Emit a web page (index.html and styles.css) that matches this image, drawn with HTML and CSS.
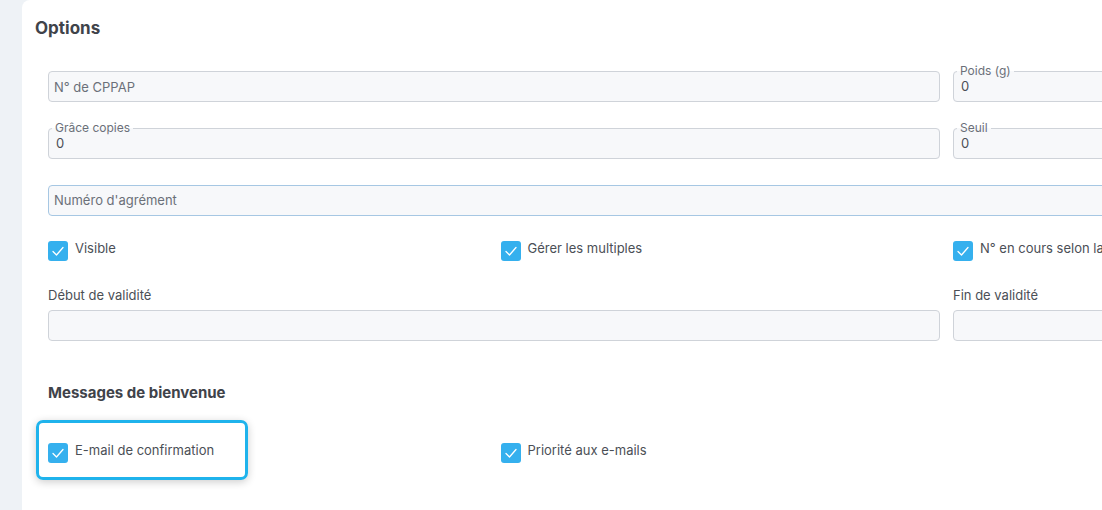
FILE: index.html
```html
<!DOCTYPE html>
<html lang="fr">
<head>
    <meta charset="UTF-8">
    <meta name="viewport" content="width=device-width, initial-scale=1.0">
    <title>Options</title>
    <link rel="stylesheet" href="styles.css">
</head>
<body>
    <div class="card">
        <h2>Options</h2>

        <div class="grid">
            <input class="field span-2" placeholder="N° de CPPAP">
            <fieldset class="legend-field">
                <legend>Poids (g)</legend>
                <div class="value">0</div>
            </fieldset>

            <fieldset class="legend-field span-2">
                <legend>Grâce copies</legend>
                <div class="value">0</div>
            </fieldset>
            <fieldset class="legend-field">
                <legend>Seuil</legend>
                <div class="value">0</div>
            </fieldset>

            <input class="field focused span-3" placeholder="Numéro d'agrément">

            <label class="check-item top-fix"><span class="check"><svg viewBox="0 0 20 20"><polyline points="5,10.5 8.5,14 15,6.5"/></svg></span><span class="check-text">Visible</span></label>
            <label class="check-item top-fix"><span class="check"><svg viewBox="0 0 20 20"><polyline points="5,10.5 8.5,14 15,6.5"/></svg></span><span class="check-text">Gérer les multiples</span></label>
            <label class="check-item top-fix"><span class="check"><svg viewBox="0 0 20 20"><polyline points="5,10.5 8.5,14 15,6.5"/></svg></span><span class="check-text">N° en cours selon la date de parution</span></label>

            <div class="span-2">
                <div class="label">Début de validité</div>
                <input class="field">
            </div>
            <div>
                <div class="label">Fin de validité</div>
                <input class="field">
            </div>
        </div>

        <h3>Messages de bienvenue</h3>

        <div class="grid">
            <label class="check-item">
                <span class="check"><svg viewBox="0 0 20 20"><polyline points="5,10.5 8.5,14 15,6.5"/></svg></span><span class="check-text">E-mail de confirmation</span>
                <span class="spotlight"></span>
            </label>
            <label class="check-item"><span class="check"><svg viewBox="0 0 20 20"><polyline points="5,10.5 8.5,14 15,6.5"/></svg></span><span class="check-text">Priorité aux e-mails</span></label>
        </div>
    </div>
</body>
</html>
```

FILE: styles.css
```css
* { box-sizing: border-box; }
html, body { height: 100%; }
body { margin: 0; background: #eef2f6; font-family: Inter, "Noto Sans", sans-serif; font-size: 13px; color: #4b4f56; overflow: hidden; }

.card { margin-left: 22px; min-height: 100%; width: 1400px; background: #fff; border-top-left-radius: 8px; padding: 17px 0 0 13px; }
h2 { margin: 0 0 32px; font-size: 17px; line-height: 22px; font-weight: 700; color: #3f434a; }
h3 { margin: 42px 0 40px 13px; font-size: 15px; line-height: 20px; font-weight: 700; color: #3f434a; }

.grid { display: grid; grid-template-columns: repeat(3, 439.5px); column-gap: 13px; row-gap: 26px; margin-left: 13px; align-items: start; }
.span-2 { grid-column: span 2; }
.span-3 { grid-column: span 3; }

.field { display: block; width: 100%; height: 31px; margin: 0; padding: 0 5px; border: 1px solid #cfd3d9; border-radius: 4px; background: #f7f8fa; font: inherit; color: #4b4f56; outline: none; }
.field::placeholder { color: #6b7079; }
.field.focused { border-color: #a6c7e3; padding-bottom: 1px; }

.legend-field { margin: -7px 0 0; min-width: 0; padding: 0 7px 7px; border: 1px solid #cfd3d9; border-radius: 4px; background: #f7f8fa; }
.legend-field legend { margin-left: -4px; padding: 0 3px; font-size: 12px; line-height: 14px; color: #6b7079; }
.legend-field .value { line-height: 16px; color: #4b4f56; }

.label { line-height: 16px; margin-bottom: 7px; color: #4b4f56; }

.check-item { position: relative; display: flex; align-items: flex-start; gap: 7px; white-space: nowrap; }
.top-fix { margin-top: -1px; }
.check { flex: none; width: 20px; height: 20px; border-radius: 3px; background: #35b0ee; }
.check svg { display: block; width: 20px; height: 20px; fill: none; stroke: #fff; stroke-width: 1.3; stroke-linecap: round; stroke-linejoin: round; }
.check-text { line-height: 16px; margin-top: -1px; color: #4b4f56; }

/* tour highlight round the current option */
.spotlight { position: absolute; left: -12px; top: -23px; width: 212px; height: 60px; border: 3px solid #1fb3ec; border-radius: 7px; box-shadow: 0 2px 9px rgba(0, 0, 0, 0.2); pointer-events: none; }
```
